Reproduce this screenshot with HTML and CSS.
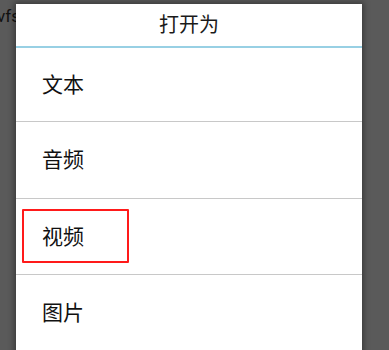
FILE: index.html
```html
<!DOCTYPE html>
<html lang="zh">
<head>
<meta charset="utf-8">
<link rel="stylesheet" href="styles.css">
</head>
<body>
<div class="bg-text">vfs</div>
<div class="dialog">
  <div class="title">打开为</div>
  <div class="title-line"></div>
  <div class="item item-1">文本</div>
  <div class="divider"></div>
  <div class="item item-2">音频</div>
  <div class="divider"></div>
  <div class="item item-3">视频<span class="highlight"></span></div>
  <div class="divider"></div>
  <div class="item item-4">图片</div>
</div>
</body>
</html>
```
FILE: styles.css
```css
html, body {
  margin: 0;
  padding: 0;
}
body {
  width: 389px;
  height: 350px;
  overflow: hidden;
  background: #5a5a5a;
  position: relative;
  font-family: "Noto Sans CJK SC", "Noto Sans", sans-serif;
}
.bg-text {
  font-family: "Roboto", "Liberation Sans", sans-serif;
  font-size: 17px;
  color: #111;
  margin-left: -3px;
  padding-top: 6px;
}
.dialog {
  position: absolute;
  left: 16px;
  top: 4px;
  width: 346px;
  height: 370px;
  background: #fff;
  box-shadow: 0 0 6px 2px rgba(0, 0, 0, 0.35);
  display: flex;
  flex-direction: column;
}
.title {
  height: 42px;
  box-sizing: border-box;
  padding-bottom: 3px;
  display: flex;
  align-items: center;
  justify-content: center;
  font-size: 20px;
  color: #1a1a1a;
}
.title-line {
  height: 2px;
  background: #98d0e4;
}
.item {
  position: relative;
  box-sizing: border-box;
  display: flex;
  align-items: center;
  padding-left: 26px;
  padding-bottom: 4px;
  font-size: 21px;
  color: #111;
}
.item-1 { height: 73px; }
.item-2 { height: 76px; }
.item-3 { height: 75px; }
.item-4 { height: 76px; }
.divider {
  height: 1px;
  background: #c8c8c8;
}
.highlight {
  position: absolute;
  left: 6px;
  top: 10px;
  width: 103px;
  height: 50px;
  border: 2px solid #ff1a1a;
  border-radius: 1px;
}
```
